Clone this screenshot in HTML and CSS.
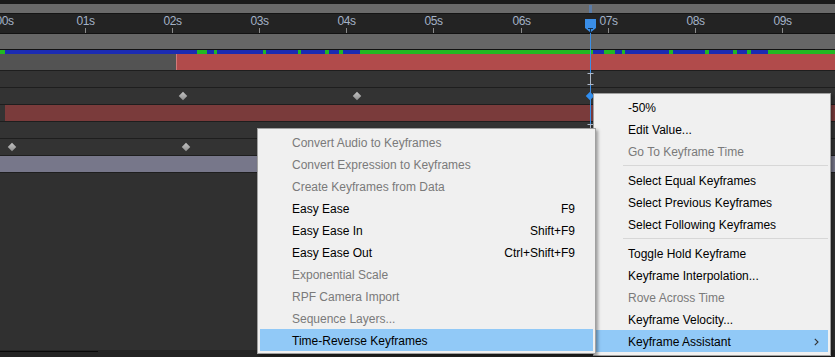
FILE: index.html
```html
<!DOCTYPE html>
<html>
<head>
<meta charset="utf-8">
<link rel="stylesheet" href="styles.css">
</head>
<body>
<div class="app">
  <div class="topstrip"></div>
  <div class="navbar"><span class="nav-mark"></span></div>
  <div class="ruler">
    <div class="mark" style="left:-2px"><span class="lbl first">00s</span></div>
    <div class="mark" style="left:85px"><span class="lbl">01s</span><span class="tk"></span></div>
    <div class="mark" style="left:172px"><span class="lbl">02s</span><span class="tk"></span></div>
    <div class="mark" style="left:259px"><span class="lbl">03s</span><span class="tk"></span></div>
    <div class="mark" style="left:346px"><span class="lbl">04s</span><span class="tk"></span></div>
    <div class="mark" style="left:433px"><span class="lbl">05s</span><span class="tk"></span></div>
    <div class="mark" style="left:521px"><span class="lbl">06s</span><span class="tk"></span></div>
    <div class="mark" style="left:608px"><span class="lbl">07s</span><span class="tk"></span></div>
    <div class="mark" style="left:695px"><span class="lbl">08s</span><span class="tk"></span></div>
    <div class="mark" style="left:782px"><span class="lbl">09s</span><span class="tk"></span></div>
  </div>
  <div class="workarea"></div>
  <div class="cache">
    <span class="seg g" style="width:5px"></span>
    <span class="seg b" style="width:192px"></span>
    <span class="seg g" style="width:10px"></span>
    <span class="seg b" style="width:7px"></span>
    <span class="seg g" style="width:3px"></span>
    <span class="seg b" style="width:46px"></span>
    <span class="seg g" style="width:3px"></span>
    <span class="seg b" style="width:32px"></span>
    <span class="seg g" style="width:3px"></span>
    <span class="seg b" style="width:24px"></span>
    <span class="seg g" style="width:4px"></span>
    <span class="seg b" style="width:10px"></span>
    <span class="seg g" style="width:4px"></span>
    <span class="seg b" style="width:17px"></span>
    <span class="seg g" style="width:233px"></span>
    <span class="seg b" style="width:11px"></span>
    <span class="seg g" style="width:11px"></span>
    <span class="seg b" style="width:7px"></span>
    <span class="seg g" style="width:3px"></span>
    <span class="seg b" style="width:44px"></span>
    <span class="seg g" style="width:4px"></span>
    <span class="seg b" style="width:32px"></span>
    <span class="seg g" style="width:4px"></span>
    <span class="seg b" style="width:24px"></span>
    <span class="seg g" style="width:4px"></span>
    <span class="seg b" style="width:10px"></span>
    <span class="seg g" style="width:4px"></span>
    <span class="seg b" style="width:17px"></span>
    <span class="seg g rest"></span>
  </div>
  <div class="row">
    <span class="pre-gray"></span>
    <span class="layer-red"></span>
  </div>
  <div class="row"></div>
  <div class="row">
    <span class="kf" style="left:183px"></span>
    <span class="kf" style="left:357px"></span>
    <span class="kf sel" style="left:590px"></span>
  </div>
  <div class="row indent">
    <span class="layer-dark-red"></span>
  </div>
  <div class="row"></div>
  <div class="row">
    <span class="kf" style="left:12px"></span>
    <span class="kf" style="left:186px"></span>
  </div>
  <div class="row purple"></div>
  <div class="lower"></div>
  <div class="status"><span class="status-line"></span></div>

  <div class="playhead-line"></div>
  <svg class="playhead-head" width="11" height="14" viewBox="0 0 11 14">
    <path d="M0 0 H11 V9 L5.5 13.5 L0 9 Z" fill="#3a8ee8"/>
    <path d="M3 9.5 H8 M5.5 9.5 V14" stroke="#14304f" stroke-width="1" fill="none"/>
  </svg>
  <svg class="ibeam ib1" width="7" height="12" viewBox="0 0 7 12">
    <path d="M0.5 0.5 H6.5 M3.5 0.5 V11.5 M0.5 11.5 H6.5" stroke="#aeb8c8" stroke-width="1" fill="none"/>
  </svg>
  <svg class="ibeam ib2" width="7" height="12" viewBox="0 0 7 12">
    <path d="M0.5 0.5 H6.5 M3.5 0.5 V11.5 M0.5 11.5 H6.5" stroke="#aeb8c8" stroke-width="1" fill="none"/>
  </svg>

  <div class="menu main-menu">
    <div class="item">-50%</div>
    <div class="item">Edit Value...</div>
    <div class="item off">Go To Keyframe Time</div>
    <div class="sep"><span></span></div>
    <div class="item">Select Equal Keyframes</div>
    <div class="item">Select Previous Keyframes</div>
    <div class="item">Select Following Keyframes</div>
    <div class="sep"><span></span></div>
    <div class="item">Toggle Hold Keyframe</div>
    <div class="item">Keyframe Interpolation...</div>
    <div class="item off">Rove Across Time</div>
    <div class="item">Keyframe Velocity...</div>
    <div class="item hot has-sub">Keyframe Assistant
      <svg class="chev" width="5" height="8" viewBox="0 0 5 8"><path d="M0.8 0.8 L4 4 L0.8 7.2" stroke="#333" stroke-width="1.1" fill="none"/></svg>
    </div>
  </div>

  <div class="menu sub-menu">
    <div class="item off">Convert Audio to Keyframes</div>
    <div class="item off">Convert Expression to Keyframes</div>
    <div class="item off">Create Keyframes from Data</div>
    <div class="item">Easy Ease<span class="key">F9</span></div>
    <div class="item">Easy Ease In<span class="key">Shift+F9</span></div>
    <div class="item">Easy Ease Out<span class="key">Ctrl+Shift+F9</span></div>
    <div class="item off">Exponential Scale</div>
    <div class="item off">RPF Camera Import</div>
    <div class="item off">Sequence Layers...</div>
    <div class="item hot">Time-Reverse Keyframes</div>
  </div>
</div>
</body>
</html>
```

FILE: styles.css
```css
* { box-sizing: border-box; }
html, body { margin: 0; padding: 0; }
body {
  width: 835px;
  height: 357px;
  overflow: hidden;
  background: #303030;
  font-family: "Liberation Sans", Arial, sans-serif;
}
.app {
  position: relative;
  width: 835px;
  height: 357px;
  display: flex;
  flex-direction: column;
  overflow: hidden;
}
.topstrip { height: 4px; background: #1b1b1b; flex: none; }
.navbar {
  height: 10px;
  flex: none;
  background: #6a6a6a;
  border-bottom: 1px solid #141414;
  position: relative;
}
.nav-mark {
  position: absolute;
  left: 589px;
  top: 1px;
  width: 3px;
  height: 8px;
  background: #5b7ba6;
}
.ruler {
  height: 20px;
  flex: none;
  background: #232323;
  border-bottom: 1px solid #121212;
  position: relative;
}
.mark {
  position: absolute;
  top: 0;
  width: 31px;
  margin-left: -15px;
  display: flex;
  flex-direction: column;
  align-items: center;
}
.lbl {
  font-size: 12px;
  line-height: 14px;
  height: 14px;
  letter-spacing: -0.5px;
  color: #a4b2c6;
  white-space: nowrap;
}
.lbl.first { margin-left: 12px; }
.tk { width: 1px; height: 5px; background: #8a8a8a; }
.workarea {
  height: 16px;
  flex: none;
  background: #666666;
  border-bottom: 1px solid #111;
}
.cache { height: 4px; flex: none; display: flex; }
.seg { height: 4px; flex: none; }
.seg.g { background: #22b822; }
.seg.b { background: #1b2bb2; }
.seg.rest { flex: 1; }

.row {
  height: 17px;
  flex: none;
  background: #333333;
  border-bottom: 1px solid #1e1e1e;
  position: relative;
  display: flex;
}
.row.indent { padding-left: 5px; }
.row.purple { background: #77778a; }
.pre-gray { width: 176px; background: #535353; }
.layer-red {
  flex: 1;
  background: #b14b4b;
  border-left: 1px solid #d07a7a;
}
.layer-dark-red { flex: 1; background: #7a3b3b; }
.kf {
  position: absolute;
  top: 5px;
  width: 6px;
  height: 6px;
  margin-left: -3px;
  transform: rotate(45deg);
  background: linear-gradient(135deg, #c4c4c4, #8e8e8e);
}
.kf.sel { background: #2f8ef0; }

.lower { flex: 1; background: #303030; }
.status { height: 7px; flex: none; background: #232323; padding-top: 1px; }
.status-line { display: block; width: 98px; height: 1px; background: #080808; }

.playhead-line {
  position: absolute;
  left: 590px;
  top: 32px;
  width: 1px;
  height: 96px;
  background: #3b8fe8;
}
.playhead-head { position: absolute; left: 585px; top: 19px; }
.ibeam { position: absolute; left: 587px; }
.ib1 { top: 73px; }
.ib2 { top: 124px; }

.menu {
  position: absolute;
  background: #f0f0f0;
  border: 1px solid #a0a0a0;
  box-shadow: 2px 2px 3px rgba(0, 0, 0, 0.35);
  font-size: 12px;
  color: #000;
  padding: 2px 0;
}
.main-menu { left: 593px; top: 93px; width: 238px; padding-bottom: 3px; }
.sub-menu { left: 257px; top: 128px; width: 339px; }
.item {
  height: 22px;
  margin: 0 2px;
  padding: 1px 18px 0 32px;
  display: flex;
  align-items: center;
  white-space: nowrap;
}
.item.off { color: #7a7a7a; }
.item.hot { background: #91c9f7; }
.item.has-sub { padding-right: 9px; }
.key { margin-left: auto; }
.chev { margin-left: auto; }
.sep {
  height: 7px;
  margin: 0 2px;
  padding-left: 27px;
  display: flex;
  align-items: center;
}
.sep span { flex: 1; height: 1px; background: #d7d7d7; }
```
